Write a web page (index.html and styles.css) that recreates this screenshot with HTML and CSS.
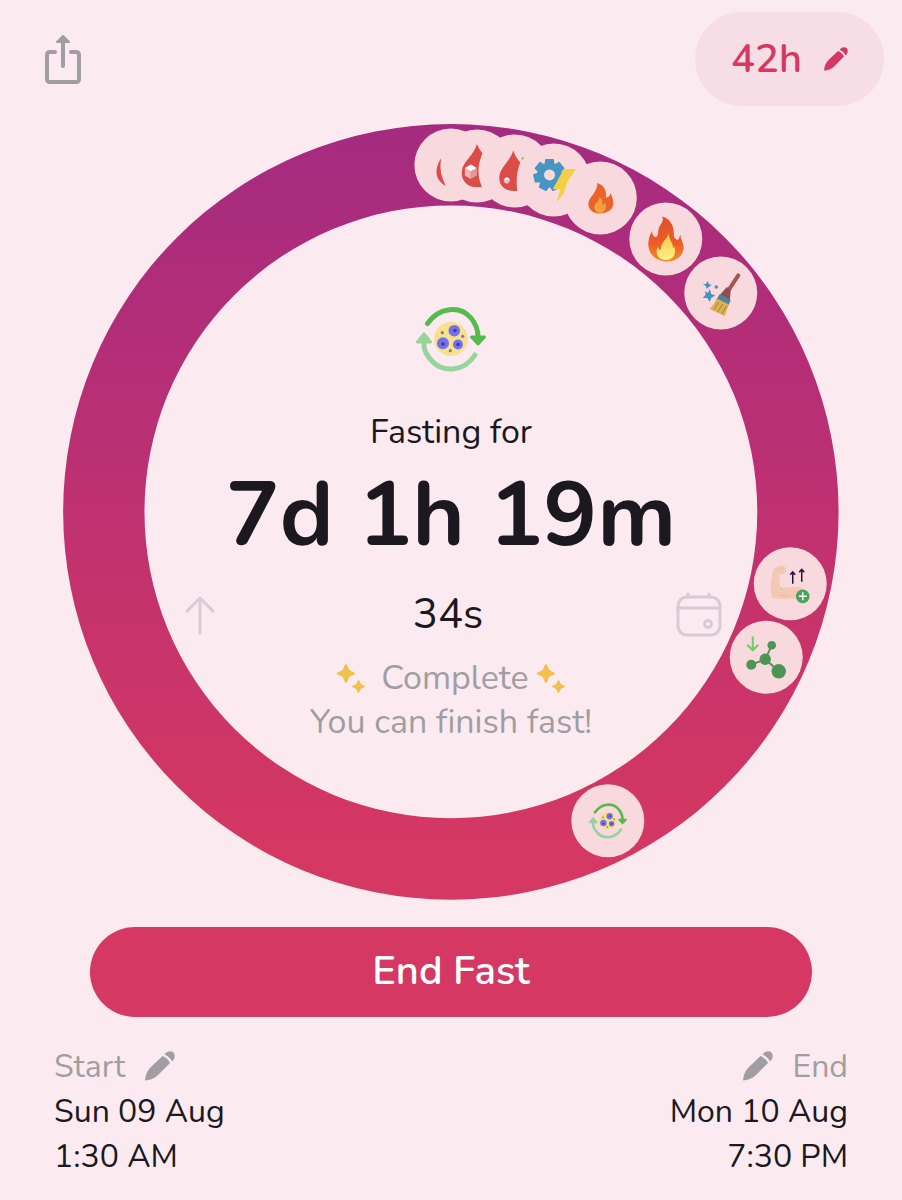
FILE: index.html
```html
<!doctype html>
<html lang="en">
<head>
  <meta charset="utf-8">
  <meta name="viewport" content="width=device-width, initial-scale=1">
  <title>Fasting</title>
  <link rel="stylesheet" href="styles.css">
</head>
<body>
  <!-- shared icons -->
  <svg class="defs" aria-hidden="true">
    <symbol id="pencil" viewBox="0 0 30 30">
      <path d="M0 29.500C.5 24 2 20 6 16L17.500 5C20 6 24 9 25 12L13 24C9 28 5 29 0 29.500Z"/>
      <path d="M19.500 3.500C22 0 26-.5 28.500 1.500 30.500 4 30 8 27 10.500 25.500 7.500 23 5 19.500 3.500Z"/>
    </symbol>
    <symbol id="sparkles" viewBox="0 0 28 29">
      <path d="M9 0C10.500 0 11 4.500 12.500 6 14 7.500 18 8 18 9.500S14 11.500 12.500 13C11 14.500 10.500 19 9 19S7 14.500 5.500 13C4 11.500 0 11 0 9.500S4 7.500 5.500 6C7 4.500 7.500 0 9 0Z"/>
      <path d="M21.500 16C22.500 16 23 19 24 20 25 21 28 21.500 28 22.500S25 24 24 25C23 26 22.500 29 21.500 29S20 26 19 25C18 24 15 23.500 15 22.500S18 21 19 20C20 19 20.500 16 21.500 16Z"/>
    </symbol>
    <symbol id="cycle" viewBox="-36 -33 72 66">
      <g fill="none" stroke-width="5" stroke-linecap="round">
        <path stroke="#56bb4c" d="M-23.500-15.500C-12-32 9-34 20-21 25-15 27-9 27-2"/>
        <path stroke="#97d49b" d="M24 16C13 33-8 34-19 22-25 16-28 10-27 2"/>
      </g>
      <path fill="#56bb4c" stroke="#56bb4c" stroke-width="3" stroke-linejoin="round" d="M20.500-2H33.500L27 5Z"/>
      <path fill="#97d49b" stroke="#97d49b" stroke-width="3" stroke-linejoin="round" d="M-33.500 3H-20.500L-27-5Z"/>
      <circle r="17" fill="#f7e18e"/>
      <g fill="#7470e8">
        <circle cx="3.300" cy="-8.300" r="5.800"/>
        <circle cx="-8" cy="4.300" r="6"/>
        <circle cx="7" cy="5.500" r="5"/>
      </g>
      <g fill="#4237b4">
        <circle cx="4" cy="-8.500" r="1.800"/>
        <circle cx="-8" cy="5" r="1.800"/>
        <circle cx="7" cy="5.500" r="1.800"/>
      </g>
      <g fill="#8d72a0">
        <circle cx="-8.700" cy="-6.300" r="1.600"/>
        <circle cx="11.700" cy="-2.700" r="1.600"/>
        <circle cx="-.7" cy="11.700" r="1.600"/>
      </g>
    </symbol>
  </svg>

  <header class="topbar">
    <button class="share" aria-label="Share">
      <svg width="38" height="50" viewBox="0 0 38 50">
        <path d="M11 18H6Q3 18 3 21V45Q3 48 6 48H32Q35 48 35 45V21Q35 18 32 18H27M19 8V32" fill="none" stroke="currentColor" stroke-width="4" stroke-linecap="round" stroke-linejoin="round"/>
        <path d="M19 2 25 8H13Z" fill="currentColor" stroke="currentColor" stroke-width="2" stroke-linejoin="round"/>
      </svg>
    </button>
    <button class="goal">42h <svg class="goal-pencil"><use href="#pencil"/></svg></button>
  </header>

  <main>
    <section class="timer">
      <svg class="ring" viewBox="-388 -388 776 776" aria-hidden="true">
        <defs>
          <linearGradient id="ring-fill" x1="0" y1="0" x2="0" y2="1">
            <stop offset="0" stop-color="#a42b80"/>
            <stop offset=".25" stop-color="#b22d78"/>
            <stop offset=".5" stop-color="#bf3170"/>
            <stop offset=".9" stop-color="#d33763"/>
            <stop offset="1" stop-color="#d53862"/>
          </linearGradient>
          <linearGradient id="flame-fill" x1="0" y1="0" x2="0" y2="1">
            <stop offset="0" stop-color="#e0502d"/>
            <stop offset=".6" stop-color="#ec5c27"/>
            <stop offset="1" stop-color="#f0922f"/>
          </linearGradient>
          <linearGradient id="flame-core" x1="0" y1="0" x2="0" y2="1">
            <stop offset="0" stop-color="#f9c53e"/>
            <stop offset="1" stop-color="#fff08c"/>
          </linearGradient>
        </defs>
        <path fill="url(#ring-fill)" fill-rule="evenodd" d="M0-388A388 388 0 0 1 0 388 388 388 0 0 1 0-388ZM0-306.500A306.500 306.500 0 0 0 0 306.500 306.500 306.500 0 0 0 0-306.500Z"/>

        <!-- stages, in order round the ring -->
        <g transform="translate(0 -347)">
          <circle class="stage" r="36.500"/>
          <path fill="#dc4c48" d="M-9.500-7C-17 4-16 15-5 21-9 12-10 4-9.500-7Z"/>
        </g>
        <g transform="translate(26 -346)">
          <circle class="stage" r="36.500"/>
          <path fill="#dc4c48" d="M0-22Q2-17 5.500-13C2-3 2 10 5 21-8 23-16 16-15 5-14-5-3-10 0-22Z"/>
          <path fill="#fff" d="M-12 2-6-1.500 0 2-6 5.500Z"/>
          <path fill="#efb9b4" d="M-12 2-6 5.500V13L-12 9.500Z"/>
          <path fill="#e39a96" d="M0 2-6 5.500V13L0 9.500Z"/>
        </g>
        <g transform="translate(64 -341)">
          <circle class="stage" r="36.500"/>
          <path fill="#dc4c48" d="M-1.500-20.500Q1-13 5.500-8.500C2 0 1 10 2.500 20-9 21-16 15-15.500 6-15-4-5-9-1.500-20.500Z"/>
          <path fill="#fff" d="M-11 8-8 6-5 8-8 10Z"/>
          <path fill="#efb9b4" d="M-11 8-8 10-5 8V11L-8 13-11 11Z"/>
          <path fill="#5aa65a" d="M6.500-12 8.500-14.500V-11.500Z"/>
        </g>
        <g transform="translate(103 -332)">
          <circle class="stage" r="36.500"/>
          <g transform="translate(-4.300 -5)" fill="#4796c2" stroke-linejoin="round">
            <path fill-rule="evenodd" d="M0-12.500A12.500 12.500 0 0 1 0 12.500 12.500 12.500 0 0 1 0-12.500ZM0-5.500A5.500 5.500 0 0 0 0 5.500 5.500 5.500 0 0 0 0-5.500Z"/>
            <g stroke="#4796c2" stroke-width="2">
              <path id="tooth" d="M-4-10-3.500-15H3.500L4-10Z"/>
              <use href="#tooth" transform="rotate(51)"/>
              <use href="#tooth" transform="rotate(103)"/>
              <use href="#tooth" transform="rotate(154)"/>
              <use href="#tooth" transform="rotate(206)"/>
              <use href="#tooth" transform="rotate(257)"/>
              <use href="#tooth" transform="rotate(309)"/>
            </g>
          </g>
          <path fill="#f2cf46" d="M10-11H22L14 2H19L2.500 22.500 6.500 9H-1Z"/>
        </g>
        <g transform="translate(149.500 -314)">
          <circle class="stage" r="36.500"/>
          <path fill="#ea6328" d="M-3-15C4-13 7-6 5.500-.5 8-.5 10-2 10-5 14 2 14 9 10 12 4 17-7 17-11 10-15 0-3-3-3-15Z"/>
          <path fill="#f3a23c" d="M-1-1C3 2 2 5 2 7 4 7 4 5 4.500 4 7 9 5 15-.5 15-7 14-7 8-4 5-2 3-1 2-1-1Z"/>
        </g>
        <g transform="translate(215 -273)">
          <circle class="stage" r="36.500"/>
          <path fill="url(#flame-fill)" d="M-3.500-22.500C3-21 9-14 8-3 9 0 12 2 13 0 14-1 13-3 15-4 14 1 19 4 17.500 11 16 19 8 23 0 22.500-11 22-18 14-17.500 4-17 0-16-5-13.500-8-14-4-12-2-10-2-6-4-9-8-6-13-4-16-2-18-3.500-22.500Z"/>
          <path fill="url(#flame-core)" d="M3-7C2 0 8 4 7 9 8 9 8 8 8.500 7 11 14 8 21 0 21-8 21-11 14-8 8-7 9-7 11-5 11-5 2 2 1 3-7Z"/>
        </g>
        <g transform="translate(270 -219)">
          <circle class="stage" r="36.500"/>
          <path stroke="#a8574c" stroke-width="4" stroke-linecap="round" d="M17.500-17.500 8-3"/>
          <path fill="#8d4f55" d="M6-6 10-3 9 8-1 2Z"/>
          <path fill="#4d849b" d="M-1 1 10 7 8 12-4 6Z"/>
          <path fill="#ddb04f" d="M-4 5.500 8 11.500 4 23-11 16Q-7 12-4 5.500Z"/>
          <path stroke="#a97c3b" fill="none" d="M-2 9-7 17M2 11-3 19M6 13 1 21"/>
          <g fill="#4593c4">
            <path d="M-11-4-9.500 1-5.500 2.500-9.500 5-11 9-13.500 5-18 5-15 1.500-16-2-13 0Z"/>
            <path d="M-13-12-12-9-9-8-12-6-14-4-15-7-18-9-15-9Z"/>
            <circle cx="-4.500" cy="-6" r="1.800"/>
          </g>
        </g>
        <g transform="translate(339.500 72)">
          <circle class="stage" r="36.500"/>
          <path fill="#f3c9b6" d="M-17-14C-13-19-6-20-4-15-4-10-8-9-11-9L-10 3C-3 5 3 1 12 4 17 7 16 13 10 14-2 16-12 15-18 14-21 6-19-5-17-14Z"/>
          <path fill="none" stroke="#eab8a4" d="M-12-14Q-9-17-6-14M-10 3-7 7M-11 11Q-5 13 0 12"/>
          <path fill="none" stroke="#2b1238" stroke-width="1.500" d="M2.500 0V-12M0-9 2.500-12 5-9M11.500-2V-14.500M9-11.500 11.500-14.500 14-11.500"/>
          <circle cx="12.500" cy="12.500" r="6.800" fill="#48a35b"/>
          <path stroke="#fff" stroke-width="1.500" d="M8.500 12.500H16.500M12.500 8.500V16.500"/>
        </g>
        <g transform="translate(315.500 145.500)">
          <circle class="stage" r="36.500"/>
          <path fill="none" stroke="#569258" stroke-width="2" d="M-15 7.500-1 2 5.500-12M-1 2 12.500 14"/>
          <g fill="#4c9552">
            <circle cx="5.500" cy="-12" r="4.300"/>
            <circle cx="-1" cy="2" r="5.700"/>
            <circle cx="-15" cy="7.500" r="5"/>
            <circle cx="12.500" cy="14" r="7.200"/>
          </g>
          <path fill="none" stroke="#69cf62" stroke-width="2" stroke-linecap="round" d="M-13.500-20V-7M-18.500-12-13.500-7-8.500-12"/>
        </g>
        <g transform="translate(157 309)">
          <circle class="stage" r="36.500"/>
          <use href="#cycle" x="-20" y="-18" width="40" height="36"/>
        </g>
      </svg>

      <div class="status">
        <svg class="status-icon" aria-hidden="true"><use href="#cycle"/></svg>
        <div class="label">Fasting for</div>
        <div class="elapsed">7d 1h 19m</div>
        <div class="seconds-row">
          <button class="side" aria-label="Show details">
            <svg width="40" height="46" viewBox="0 0 40 46"><path d="M20 41V6M7 19 20 6 33 19"/></svg>
          </button>
          <span class="seconds">34s</span>
          <button class="side" aria-label="Calendar">
            <svg width="46" height="46" viewBox="0 0 46 46"><rect x="2" y="5" width="42" height="38" rx="9"/><path d="M2 16H44M12 2V5M33 2V5"/><circle cx="32" cy="32" r="3.500"/></svg>
          </button>
        </div>
        <div class="complete">
          <svg class="sparkles sparkles-before" aria-hidden="true"><use href="#sparkles"/></svg>
          Complete
          <svg class="sparkles" aria-hidden="true"><use href="#sparkles"/></svg>
        </div>
        <div class="hint">You can finish fast!</div>
      </div>
    </section>

    <button class="end-fast">End Fast</button>

    <section class="times">
      <div class="time">
        <button class="edit">Start <svg class="edit-pencil"><use href="#pencil"/></svg></button>
        <div>Sun 09 Aug</div>
        <div>1:30 AM</div>
      </div>
      <div class="time time-end">
        <button class="edit"><svg class="edit-pencil"><use href="#pencil"/></svg> End</button>
        <div>Mon 10 Aug</div>
        <div>7:30 PM</div>
      </div>
    </section>
  </main>
</body>
</html>
```

FILE: styles.css
```css
body {
  margin: 0;
  background: #fbebf1;
  color: #1c1820;
  font-family: Nunito, "Open Sans", sans-serif;
  font-size: 32px;
  line-height: 45px;
}

button {
  margin: 0;
  padding: 0;
  border: 0;
  background: none;
  color: inherit;
  font: inherit;
  cursor: pointer;
}

svg {
  display: block;
  flex: none;
}

.defs {
  position: absolute;
  width: 0;
  height: 0;
}

/* top bar */
.topbar {
  display: flex;
  justify-content: space-between;
  align-items: center;
  padding: 12px 18px 18px 44px;
}
.share {
  color: #a09ea0;
}
.goal {
  display: flex;
  align-items: center;
  gap: 22px;
  height: 94px;
  padding: 0 36px;
  border-radius: 47px;
  background: #f6dde6;
  color: #d53862;
  font-size: 40px;
  font-weight: 600;
}
.goal-pencil {
  width: 24px;
  height: 24px;
  fill: currentColor;
}

/* ring with the timer in the middle */
.timer {
  display: grid;
  width: 86%;
  margin: 0 auto;
}
.ring,
.status {
  grid-area: 1 / 1;
}
.ring {
  width: 100%;
}
.stage {
  fill: #f8dade;
}
.status {
  display: flex;
  flex-direction: column;
  align-items: center;
  padding-top: 182px;
  font-size: 34px;
  line-height: 44px;
  font-variant-ligatures: none;
}
.status-icon {
  width: 72px;
  height: 66px;
}
.label {
  margin-top: 38px;
}
.elapsed {
  font-size: 90px;
  font-weight: 700;
  line-height: 124px;
  white-space: nowrap;
}
.seconds-row {
  display: flex;
  justify-content: space-between;
  align-items: center;
  width: 70%;
  margin: 14px 0 18px;
}
.seconds {
  font-size: 42px;
}
.side {
  color: #d8ccd2;
}
.side svg {
  fill: none;
  stroke: currentColor;
  stroke-width: 3;
  stroke-linecap: round;
}
.complete,
.hint {
  color: #a09ea0;
}
.complete {
  display: flex;
  align-items: center;
  gap: 8px;
}
.sparkles {
  width: 28px;
  height: 29px;
  fill: #f1c04d;
}
.sparkles-before {
  margin-right: 8px;
}

.end-fast {
  display: block;
  width: 80%;
  height: 90px;
  margin: 27px auto;
  border-radius: 45px;
  background: #d53862;
  color: #fff;
  font-size: 40px;
  font-weight: 600;
}

/* start and end */
.times {
  display: flex;
  justify-content: space-between;
  padding: 0 54px;
}
.edit {
  display: flex;
  align-items: center;
  gap: 20px;
  color: #a09ea0;
}
.edit-pencil {
  width: 30px;
  height: 30px;
  fill: currentColor;
}
.time-end {
  display: flex;
  flex-direction: column;
  align-items: flex-end;
}
```
